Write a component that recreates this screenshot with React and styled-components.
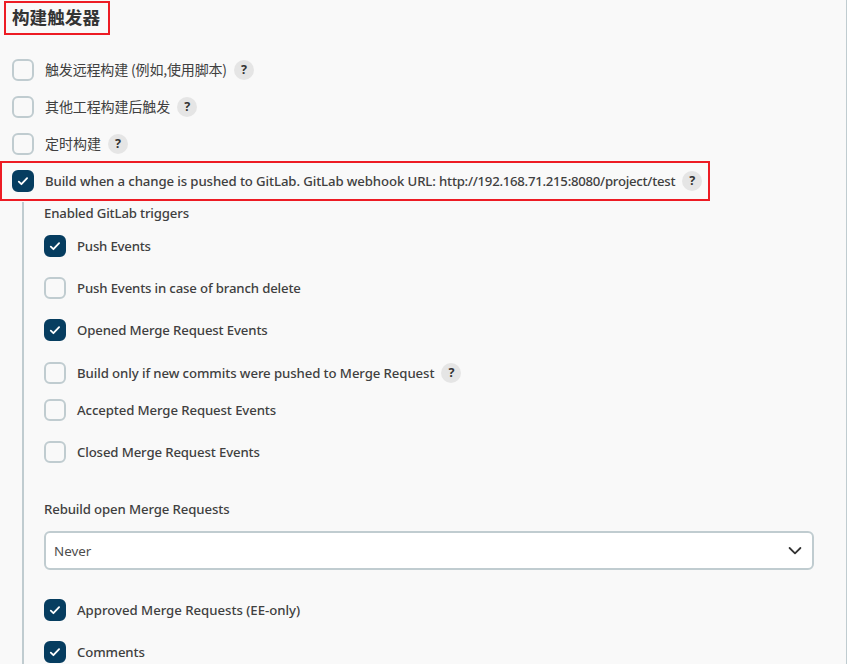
import React from "react";
import styled, { createGlobalStyle } from "styled-components";

const GlobalStyle = createGlobalStyle`
  *, *::before, *::after { box-sizing: border-box; }
  body {
    margin: 0;
    background: #fff;
    color: #404040;
    font-family: "Noto Sans", "Noto Sans CJK SC", sans-serif;
    font-size: 13.2px;
    overflow: hidden;
  }
`;

const Panel = styled.main`
  display: flex;
  flex-direction: column;
  align-items: flex-start;
  width: 847px;
  height: 664px;
  padding-top: 1px;
  overflow: hidden;
  background: #f9f9f9;
  border-right: 1px solid #c0ccd0;
`;

const Title = styled.h2`
  flex: none;
  width: 106px;
  height: 34px;
  margin: 0 0 24px 4px;
  padding-left: 6px;
  border: 2px solid #ed1c24;
  color: #333;
  font: 700 17.6px/27px "Noto Sans CJK SC", sans-serif;
  white-space: nowrap;
`;

const Row = styled.div`
  display: flex;
  align-items: center;
  flex: none;
  height: 22px;
  margin-bottom: ${(p) => p.$after ?? 0}px;
  padding-left: ${(p) => p.$indent ?? 0}px;
`;

const Highlight = styled.div`
  display: flex;
  align-items: center;
  flex: none;
  width: 710px;
  height: 40px;
  padding-left: 10px;
  border: 2px solid #ed1c24;
`;

const Box = styled.span`
  display: flex;
  flex: none;
  width: 22px;
  height: 22px;
  margin-right: 11px;
  border: 2px solid ${(p) => (p.$on ? "#063d60" : "#c0ccd0")};
  border-radius: 6px;
  background: ${(p) => (p.$on ? "#063d60" : "#f9f9f9")};
`;

const Label = styled.span`
  font-weight: 500;
  letter-spacing: ${(p) => p.$spacing ?? 0}px;
  line-height: 20px;
  white-space: nowrap;
`;

const Url = styled.span`
  letter-spacing: -0.26px;
`;

const ChineseLabel = styled(Label)`
  margin-bottom: 2px;
  font: 400 14px/20px "Noto Sans CJK SC", sans-serif;
`;

const HelpBadge = styled.span`
  display: flex;
  align-items: center;
  justify-content: center;
  flex: none;
  width: 20px;
  height: 20px;
  margin-left: 7px;
  border-radius: 50%;
  background: #e5e5e5;
  color: #333;
  font: 700 12.5px/20px "Noto Sans", sans-serif;
`;

const Nested = styled.section`
  display: flex;
  flex-direction: column;
  flex: none;
  width: 792px;
  height: 470px;
  margin: 1px 0 0 22px;
  padding-left: 20px;
  border-left: 2px solid #c0ccd0;
`;

const Heading = styled.div`
  flex: none;
  height: 20px;
  line-height: 20px;
  margin: ${(p) => p.$margin};
`;

const SelectField = styled.div`
  display: flex;
  align-items: center;
  justify-content: space-between;
  flex: none;
  width: 770px;
  height: 39px;
  margin-bottom: 29px;
  padding: 0 10px 0 8px;
  border: 2px solid #c0ccd0;
  border-radius: 6px;
  background: #fff;
  color: #4d4d4d;
  font-size: 13.4px;
`;

function Checkbox({ on }) {
  return (
    <Box $on={on}>
      {on && (
        <svg width="18" height="18" viewBox="0 0 18 18" fill="none">
          <path d="M4.8 9.7 7.4 12.2 13.1 6.1" stroke="#fff" strokeWidth="1.8" strokeLinecap="round" strokeLinejoin="round" />
        </svg>
      )}
    </Box>
  );
}

function Option({ text, on, help, cjk, spacing, indent, after }) {
  const Text = cjk ? ChineseLabel : Label;
  return (
    <Row $indent={indent} $after={after}>
      <Checkbox on={on} />
      <Text $spacing={spacing}>{text}</Text>
      {help && <HelpBadge>?</HelpBadge>}
    </Row>
  );
}

export default function App() {
  return (
    <>
      <GlobalStyle />
      <Panel>
        <Title>构建触发器</Title>
        <Option text="触发远程构建 (例如,使用脚本)" cjk help spacing={-0.16} indent={12} after={15} />
        <Option text="其他工程构建后触发" cjk help spacing={-0.1} indent={12} after={15} />
        <Option text="定时构建" cjk help indent={12} after={6} />
        <Highlight>
          <Checkbox on />
          <Label $spacing={-0.11}>
            Build when a change is pushed to GitLab. GitLab webhook URL: <Url>http://192.168.71.215:8080/project/test</Url>
          </Label>
          <HelpBadge>?</HelpBadge>
        </Highlight>
        <Nested>
          <Heading $margin="1px 0 12px"><Label $spacing={-0.16}>Enabled GitLab triggers</Label></Heading>
          <Option text="Push Events" on spacing={-0.2} after={20} />
          <Option text="Push Events in case of branch delete" spacing={-0.155} after={20} />
          <Option text="Opened Merge Request Events" on spacing={-0.135} after={21} />
          <Option text="Build only if new commits were pushed to Merge Request" help spacing={-0.09} after={15} />
          <Option text="Accepted Merge Request Events" spacing={-0.11} after={20} />
          <Option text="Closed Merge Request Events" spacing={-0.13} after={36} />
          <Heading $margin="0 0 12px"><Label $spacing={-0.12}>Rebuild open Merge Requests</Label></Heading>
          <SelectField>
            Never
            <svg width="14" height="10" viewBox="0 0 14 10" fill="none">
              <path d="M1.6 2 7 7.3 12.4 2" stroke="#333" strokeWidth="1.8" strokeLinecap="round" strokeLinejoin="round" />
            </svg>
          </SelectField>
          <Option text="Approved Merge Requests (EE-only)" on spacing={-0.02} after={20} />
          <Option text="Comments" on spacing={-0.13} />
        </Nested>
      </Panel>
    </>
  );
}
